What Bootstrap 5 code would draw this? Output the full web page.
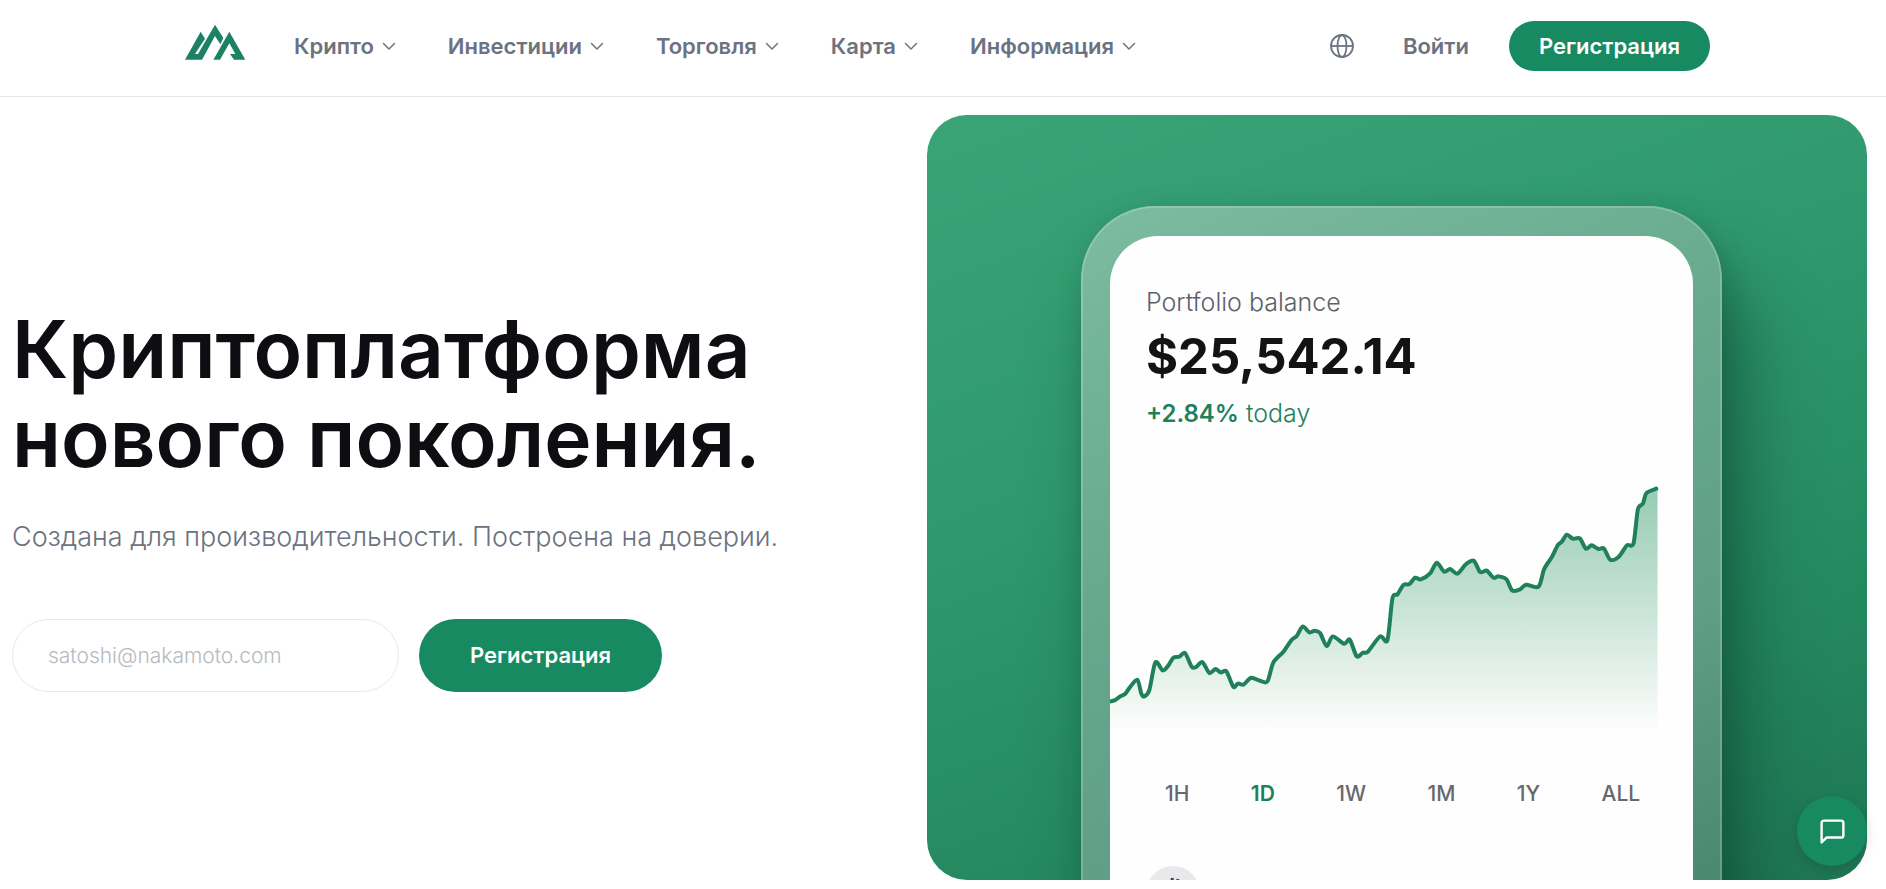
<!DOCTYPE html>
<html lang="ru">
<head>
<meta charset="utf-8">
<meta name="viewport" content="width=device-width, initial-scale=1">
<title>Криптоплатформа нового поколения</title>
<link href="https://cdn.jsdelivr.net/npm/bootstrap@5.3.0/dist/css/bootstrap.min.css" rel="stylesheet">
<style>
  :root { --brand: #178a62; --line-green: #1f805b; --muted: #6b7280; --ink: #0d0e12; }
  body { font-family: Inter, "Noto Sans", sans-serif; color: var(--ink); background: #fff; }

  .site-header { border-bottom: 1px solid #e5e7eb; padding: 21px 0 25px; }
  .header-inner { max-width: 1534px; padding-left: 8px; }
  .logo { width: 62px; height: 36px; display: block; margin-bottom: 8px; }
  .menu { gap: 52px; margin-left: 48px; }
  .menu .nav-link, .login-link { color: var(--muted); font-size: 22px; font-weight: 600; line-height: 30px; padding: 0; text-decoration: none; }
  .menu .nav-link { display: flex; align-items: center; gap: 8px; }
  .menu svg { width: 14px; height: 14px; }
  .login-link { margin: 0 40px 0 48px; }
  .icon-btn { border: 0; background: none; padding: 0; color: var(--muted); line-height: 0; }
  .icon-btn svg { width: 26px; height: 26px; }
  .btn-brand { background: var(--brand); color: #fff; border: 0; border-radius: 40px; font-size: 22px; font-weight: 600; line-height: 30px; padding: 10px 30px; }
  .btn-brand:hover { background: #127a56; color: #fff; }

  .hero { display: grid; grid-template-columns: 36fr 37fr; align-items: center; padding: 18px 19px 9px 12px; }
  .hero-title { font-size: 80px; line-height: 89px; font-weight: 600; margin: 0 0 35px; }
  .hero-lead { font-size: 27px; line-height: 40px; font-weight: 300; color: var(--muted); margin: 0 0 62px; }
  .signup { gap: 20px; }
  .email-box { width: 387px; height: 73px; border-radius: 40px; border: 1px solid #e5e7eb; padding: 0 35px; font-size: 21px; font-weight: 300; }
  .email-box::placeholder { color: #b5bac1; opacity: 1; }
  .signup .btn-brand { width: 243px; height: 73px; }

  .showcase { aspect-ratio: 940 / 765; border-radius: 40px; overflow: hidden; padding-top: 91px;
    background: linear-gradient(160deg, #3aa477 0%, #2f986e 40%, #24885f 75%, #1f7554 100%); }
  .phone { width: 68.2%; height: 125%; margin-left: 16.4%; border-radius: 74px; padding: 30px 29px;
    background: linear-gradient(155deg, #7cbca1 0%, #66a98d 35%, #5f9f86 60%, #46846c 90%);
    box-shadow: inset 0 0 0 2px rgba(255,255,255,.18), 24px 60px 70px rgba(10,60,42,.5), 4px 8px 24px rgba(10,70,48,.25); }
  .screen { height: 100%; background: #fefefe; border-radius: 48px; padding-top: 50px; }
  .balance { padding: 0 36px; }
  .balance-label { font-size: 25px; line-height: 32px; font-weight: 300; color: #5b616b; margin: 0 0 9px; }
  .balance-sum { font-size: 49px; line-height: 60px; font-weight: 700; color: #111315; margin: 0 0 10px; }
  .balance-change { font-size: 25px; line-height: 32px; font-weight: 300; color: var(--line-green); margin: 0 0 53px; }
  .balance-change strong { font-size: 24px; font-weight: 600; }
  .chart { display: block; width: 100%; height: auto; margin-bottom: 44px; }
  .ranges { padding: 0 53px 0 55px; margin-bottom: 58px; }
  .range-btn { border: 0; background: none; padding: 0; font-size: 21px; line-height: 28px; font-weight: 500; color: #66686b; }
  .range-btn.active { color: var(--line-green); font-weight: 600; }
  .coin { display: block; width: 54px; height: 54px; margin-left: 36px; }

  .chat-btn { right: 19px; bottom: 23px; width: 70px; height: 70px; border: 0; border-radius: 50%; background: var(--brand); color: #fff; padding: 0; box-shadow: 0 4px 12px rgba(0,0,0,.15); }
  .chat-btn svg { width: 29px; height: 29px; }
  @media (max-width: 1199px) {
    .hero { grid-template-columns: 1fr; padding: 18px 12px; row-gap: 40px; }
    .hero-title { font-size: 44px; line-height: 52px; }
  }
</style>
</head>
<body>
<svg width="0" height="0" class="position-absolute" aria-hidden="true">
  <symbol id="chevron" viewBox="0 0 14 14"><path d="M1.5 4.5 7 10l5.500-5.500" fill="none" stroke="currentColor" stroke-width="1.500" stroke-linecap="round" stroke-linejoin="round"/></symbol>
</svg>

<header class="site-header">
  <div class="header-inner mx-auto d-flex align-items-center">
    <a href="#" aria-label="Главная">
      <svg class="logo" viewBox="72 70 186 108" fill="#1d8264">
        <path d="M75 177 122 93l13 21-30 46h9L165 72l25 40-9 19-16-25-39 71Z"/>
        <path d="M160 177 208 93l48 84h-34l-12-17h16l-18-32-28 49Z"/>
      </svg>
    </a>
    <nav class="menu nav d-flex flex-wrap" aria-label="Меню">
      <a class="nav-link" href="#">Крипто <svg><use href="#chevron"/></svg></a>
      <a class="nav-link" href="#">Инвестиции <svg><use href="#chevron"/></svg></a>
      <a class="nav-link" href="#">Торговля <svg><use href="#chevron"/></svg></a>
      <a class="nav-link" href="#">Карта <svg><use href="#chevron"/></svg></a>
      <a class="nav-link" href="#">Информация <svg><use href="#chevron"/></svg></a>
    </nav>
    <div class="d-flex align-items-center ms-auto">
      <button class="icon-btn" type="button" aria-label="Язык">
        <svg viewBox="0 0 26 26" fill="none" stroke="currentColor" stroke-width="1.800"><circle cx="13" cy="13" r="11"/><ellipse cx="13" cy="13" rx="4.500" ry="11"/><path d="M2 13h22"/></svg>
      </button>
      <a class="login-link" href="#">Войти</a>
      <button class="btn btn-brand" type="button">Регистрация</button>
    </div>
  </div>
</header>

<main class="hero">
  <section>
    <h1 class="hero-title">Криптоплатформа<br>нового поколения.</h1>
    <p class="hero-lead">Создана для производительности. Построена на доверии.</p>
    <form class="signup d-flex flex-wrap">
      <input class="form-control email-box" type="email" placeholder="satoshi@nakamoto.com" aria-label="Email">
      <button class="btn btn-brand" type="button">Регистрация</button>
    </form>
  </section>

  <section class="showcase">
    <div class="phone">
      <div class="screen">
        <div class="balance">
          <p class="balance-label">Portfolio balance</p>
          <p class="balance-sum">$25,542.14</p>
          <p class="balance-change"><strong>+2.84%</strong> today</p>
        </div>
        <svg class="chart" viewBox="30 36 1749 759" aria-hidden="true">
          <defs><linearGradient id="fade" gradientUnits="userSpaceOnUse" x1="0" y1="50" x2="0" y2="790">
            <stop offset="0" stop-color="#96cbb2"/><stop offset=".4" stop-color="#bfdfd1"/><stop offset=".75" stop-color="#e4f1ea"/><stop offset="1" stop-color="#fefefe"/>
          </linearGradient></defs>
          <path id="area" fill="url(#fade)"/>
          <path id="curve" fill="none" stroke="#1f805b" stroke-width="12" stroke-linejoin="round" stroke-linecap="round"/>
        </svg>
        <div class="ranges d-flex justify-content-between">
          <button class="range-btn" type="button">1H</button>
          <button class="range-btn active" type="button">1D</button>
          <button class="range-btn" type="button">1W</button>
          <button class="range-btn" type="button">1M</button>
          <button class="range-btn" type="button">1Y</button>
          <button class="range-btn" type="button">ALL</button>
        </div>
        <svg class="coin" viewBox="0 0 54 54" aria-hidden="true"><circle cx="27" cy="27" r="27" fill="#e9e9ec"/><path d="m26.500 12-1.500 7M32 13l-1.500 7" stroke="#444" stroke-width="3"/></svg>
      </div>
    </div>
  </section>
</main>

<button class="chat-btn position-fixed d-flex align-items-center justify-content-center" type="button" aria-label="Чат">
  <svg viewBox="0 0 24 24" fill="none" stroke="currentColor" stroke-width="2" stroke-linecap="round" stroke-linejoin="round"><path d="M21 15a2 2 0 0 1-2 2H7l-4 4V5a2 2 0 0 1 2-2h14a2 2 0 0 1 2 2z"/></svg>
</button>

<script src="https://cdn.jsdelivr.net/npm/bootstrap@5.3.0/dist/js/bootstrap.bundle.min.js"></script>
<script>
  // Portfolio history as x, y pairs, drawn as a smooth curve with a filled area below.
  const history = [
    [26,692],[45,687],[60,676],[75,669],[90,648],[112,626],[124,668],[133,676],[148,657],[166,574],[188,598],[203,586],[220,560],[238,557],
    [255,546],[275,587],[288,588],[307,573],[328,606],[346,594],[362,604],[379,601],[400,647],[414,637],[430,641],[453,620],[480,629],[502,631],
    [520,574],[550,542],[575,506],[590,495],[608,466],[628,484],[644,479],[660,486],[680,525],[698,496],[732,518],[749,506],[770,556],[788,545],
    [803,542],[840,496],[862,507],[877,382],[892,370],[910,342],[928,339],[945,320],[962,325],[990,307],[1010,275],[1032,302],[1050,294],
    [1072,308],[1098,279],[1121,269],[1140,303],[1160,299],[1180,320],[1195,316],[1219,325],[1236,358],[1258,356],[1278,341],[1315,347],
    [1332,294],[1355,258],[1373,222],[1385,212],[1400,191],[1418,203],[1439,202],[1457,233],[1474,223],[1495,234],[1511,232],[1530,266],
    [1555,258],[1580,223],[1600,217],[1613,115],[1628,98],[1639,66],[1668,53]
  ];
  let d = 'M' + history[0];
  for (let i = 0; i < history.length - 1; i++) {
    const a = history[Math.max(i - 1, 0)], b = history[i], c = history[i + 1], e = history[Math.min(i + 2, history.length - 1)];
    const k = 0.14;
    d += `C${b[0] + (c[0] - a[0]) * k} ${b[1] + (c[1] - a[1]) * k} ${c[0] - (e[0] - b[0]) * k} ${c[1] - (e[1] - b[1]) * k} ${c}`;
  }
  document.getElementById('curve').setAttribute('d', d);
  document.getElementById('area').setAttribute('d', d + 'L1672 53V795H26Z');
</script>
</body>
</html>
